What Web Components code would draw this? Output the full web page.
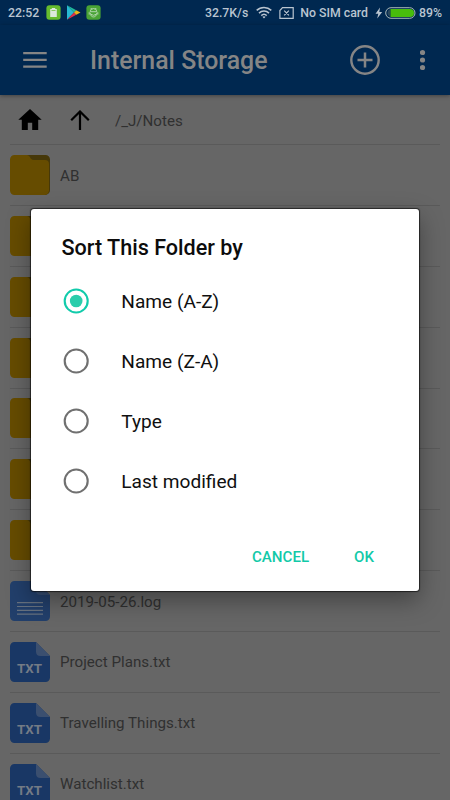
<!DOCTYPE html>
<html lang="en">
<head>
<meta charset="utf-8">
<title>Internal Storage</title>
<style>
html,body{margin:0;height:100%;overflow:hidden;background:#666}
body{font-family:Roboto,"Noto Sans",sans-serif}
</style>
</head>
<body>
<file-app></file-app>
<script>
const define = (name, html) => customElements.define(name, class extends HTMLElement {
  constructor() {
    super();
    const t = document.createElement('template');
    t.innerHTML = html;
    this.attachShadow({mode: 'open'}).appendChild(t.content.cloneNode(true));
  }
});

define('status-bar', `
<style>
:host{display:flex;align-items:center;height:25px;padding:0 8px;box-sizing:border-box;background:#002850;color:#bac5d0;font-size:12.300px;font-weight:500;line-height:24px;white-space:nowrap}
svg{display:block;flex:none}
span{padding-top:1px}
.time{width:38px}
.app{margin-right:5px}
.speed{margin-left:auto}
.wifi{margin-left:8px}.sim{margin-left:7px}.none{margin-left:6px}.bolt{margin-left:7px}.bat{margin-left:2px}.pct{margin-left:3px}
</style>
<span class="time">22:52</span>
<svg class="app" width="15" height="15" viewBox="0 0 15 15"><rect x=".4" y=".2" width="14.2" height="14.6" rx="3" fill="#66bc2e"/><path d="M4.2 4h1.6V3h3.4v1h1.6v8H4.2z" fill="#dce9dc"/><path d="M5.500 5.500h4" stroke="#66bc2e" stroke-width=".7"/></svg>
<svg class="app" width="15" height="15" viewBox="0 0 15 15"><path d="M1 .2v14.6L8 7.500z" fill="#28b9d3"/><path d="M1 .2 10.300 5.200 8 7.500z" fill="#20bc9c"/><path d="M1 14.800 10.300 9.800 8 7.500z" fill="#dc304c"/><path d="M10.300 5.200 14.500 7.500 10.300 9.800 8 7.500z" fill="#e9b51a"/></svg>
<svg class="app" width="15" height="15" viewBox="0 0 15 15"><rect x=".4" y=".2" width="14.2" height="14.6" rx="3" fill="#49a335"/><g fill="none" stroke="#b9d9b5" stroke-width=".9"><path d="M4.200 6.700a3.300 3.200 0 0 1 6.600 0zM4.200 7.800c0 5.500 6.600 5.500 6.600 0M4.800 3l1.100 1.400M10.200 3 9.100 4.400M3.200 7.200v2.400M11.800 7.200v2.400M5 9.300q2.500 2 5 0"/></g></svg>
<span class="speed">32.7K/s</span>
<svg class="wifi" width="16" height="13" viewBox="0 0 16 13" fill="none" stroke="#bac5d0" stroke-width="1.500"><path d="M.7 4.400a10.600 10.600 0 0 1 14.600 0M3 7.100a7.200 7.200 0 0 1 10 0M5.300 9.600a3.900 3.900 0 0 1 5.400 0"/><path d="M6.400 10.700 8 12.400l1.600-1.700q-1.600-1-3.200 0z" fill="#bac5d0" stroke="none"/></svg>
<svg class="sim" width="15" height="12" viewBox="0 0 15 12" fill="none" stroke="#bac5d0" stroke-width="1.200"><path d="M3.500.7h10.700v10.600H.9V3.500zM5.200 3.700l4.700 4.700M9.900 3.700 5.200 8.400"/></svg>
<span class="none">No SIM card</span>
<svg class="bolt" width="8" height="12" viewBox="0 0 8 12"><path d="M5 .5.5 6.700h2.800L2.200 11.500 7.200 5H4.300z" fill="#bac5d0"/></svg>
<svg class="bat" width="31" height="12" viewBox="0 0 31 12"><rect x=".7" y=".7" width="29.300" height="10.600" rx="5.300" fill="none" stroke="#a9b7b6" stroke-width="1"/><path d="M5.500 2h19.500a4 4 0 0 1 0 8h-19.500z" fill="#48bd0c"/><path d="M5 2.300a4 4 0 0 0 0 7.400z" fill="#29475c"/></svg>
<span class="pct">89%</span>`);

define('app-bar', `
<style>
:host{display:flex;align-items:center;height:70px;padding:0 24px 0 23px;box-sizing:border-box;background:#002850;position:relative;z-index:1;box-shadow:0 1px 4px rgba(0,0,0,.35)}
svg{display:block;flex:none}
h1{flex:1;margin:2px 0 0 43px;font-size:24.900px;font-weight:500;line-height:30px;color:#858585;white-space:nowrap}
.dots{margin-left:40px}
</style>
<svg width="24" height="16" viewBox="0 0 24 16" fill="#858585"><path d="M.2 0h23.500v2.300H.2zM.2 6.700h23.500V9H.2zM.2 13.400h23.500v2.300H.2z"/></svg>
<h1><slot></slot></h1>
<svg width="30" height="30" viewBox="0 0 30 30" fill="none" stroke="#858585" stroke-width="2.400"><circle cx="15" cy="15" r="13.700"/><path d="M7.500 15h15M15 7.500v15" stroke-width="2.500"/></svg>
<svg class="dots" width="6" height="22" viewBox="0 0 6 22" fill="#858585"><circle cx="2.500" cy="3.500" r="2.600"/><circle cx="2.500" cy="11" r="2.600"/><circle cx="2.500" cy="18.500" r="2.600"/></svg>`);

define('path-bar', `
<style>
:host{display:flex;align-items:center;height:49.200px;margin:0 10px;border-bottom:1px solid #5a5a5a;box-sizing:content-box;font-size:15.100px;color:#303030}
svg{display:block}
.home{margin-left:8px}.up{margin-left:28px}
span{margin:2px 0 0 25px}
</style>
<svg class="home" width="24" height="21" viewBox="0 0 24 21"><path d="M12 0 .3 10.700h3.500V21h6v-7.200h4.400V21h6V10.700h3.500z" fill="#000"/></svg>
<svg class="up" width="20" height="20" viewBox="0 0 20 20" fill="none" stroke="#000" stroke-width="2.200"><path d="M10 20V2M1.200 10.300 10 1.500l8.800 8.800"/></svg>
<span><slot></slot></span>`);

define('folder-icon', `
<style>:host{display:block}svg{display:block}</style>
<svg width="40" height="40" viewBox="0 0 40 40"><path d="M15 0h20.500a4.500 4.500 0 0 1 4.500 4.500V35a5 5 0 0 1-5 5h-9z" fill="#463809"/><path d="M4.500 0h12.500q1.500 0 2.500 1.500l1.500 2.200Q22 5 24 5h11q4 0 4 4v26.500a4.500 4.500 0 0 1-4.500 4.500h-30A4.500 4.500 0 0 1 0 35.500V4.500A4.500 4.500 0 0 1 4.500 0z" fill="#664c00"/></svg>`);

define('log-icon', `
<style>:host{display:block}svg{display:block}</style>
<svg width="40" height="40" viewBox="0 0 40 40"><path d="M4.500 0H26l14 14v21.500a4.500 4.500 0 0 1-4.500 4.500h-31A4.500 4.500 0 0 1 0 35.500v-31A4.500 4.500 0 0 1 4.500 0z" fill="#223f6b"/><path d="M26 0l14 14H30.500q-4.500 0-4.500-4.500z" fill="#354c70"/><path d="M7 21.700h26M7 25.500h26M7 29.400h26M7 33.200h26" stroke="#66717f" stroke-width="1.200"/></svg>`);

define('txt-icon', `
<style>:host{display:grid;width:40px;height:40px;color:#747b85;font-size:13.300px;font-weight:700;line-height:16px}svg,span{grid-area:1/1}svg{display:block}span{align-self:end;text-align:center;padding:0 1px 4.500px 0}</style>
<svg width="40" height="40" viewBox="0 0 40 40"><path d="M4.500 0H26l14 14v21.500a4.500 4.500 0 0 1-4.500 4.500h-31A4.500 4.500 0 0 1 0 35.500v-31A4.500 4.500 0 0 1 4.500 0z" fill="#193765"/><path d="M26 0l14 14H30.500q-4.500 0-4.500-4.500z" fill="#3b4f6f"/></svg><span>TXT</span>`);

define('file-row', `
<style>
:host{display:flex;align-items:center;gap:10px;height:60.850px;box-sizing:border-box;margin:0 10px;border-bottom:1px solid #5a5a5a;font-size:15.150px;color:#303030;white-space:nowrap}
span{padding-top:1px}
</style>
<slot name="icon"></slot><span><slot></slot></span>`);

define('radio-row', `
<style>
:host{display:flex;align-items:center;height:60px;padding-left:32px;font-size:19.100px;color:#101010}
svg{display:block;margin-right:32.300px}
.dot{display:none}
:host([checked]) .ring{stroke:#11cbab}
:host([checked]) .dot{display:block}
</style>
<svg width="26" height="26" viewBox="0 0 26 26"><circle class="ring" cx="13.200" cy="13" r="11.500" fill="none" stroke="#707070" stroke-width="2.100"/><circle class="dot" cx="13.200" cy="13" r="6.300" fill="#2acdab"/></svg>
<span><slot></slot></span>`);

define('sort-dialog', `
<style>
:host{position:absolute;left:31px;top:209px;width:388px;height:382px;box-sizing:border-box;background:#fff;border-radius:3px;box-shadow:0 0 1px 1px rgba(0,0,0,.6),0 9px 24px rgba(0,0,0,.36);z-index:2;display:flex;flex-direction:column}
h2{margin:24px 0 8px 30.500px;font-size:21.600px;line-height:30px;font-weight:500;color:#0c0c0c}
footer{display:flex;justify-content:flex-end;gap:45px;margin-top:36px;padding-right:45px;font-size:15.100px;line-height:20px;font-weight:500;color:#12c9a8}
</style>
<h2><slot name="title"></slot></h2>
<slot></slot>
<footer><span>CANCEL</span><span>OK</span></footer>`);

const folders = ['AB', '', '', '', '', '', ''].map(n => `<file-row><folder-icon slot="icon"></folder-icon>${n}</file-row>`).join('');
const texts = ['Project Plans.txt', 'Travelling Things.txt', 'Watchlist.txt'].map(n => `<file-row><txt-icon slot="icon"></txt-icon>${n}</file-row>`).join('');
define('file-app', `
<style>:host{display:block;width:450px;height:800px;overflow:hidden;position:relative;background:#666}</style>
<status-bar></status-bar>
<app-bar>Internal Storage</app-bar>
<path-bar>/_J/Notes</path-bar>
${folders}
<file-row><log-icon slot="icon"></log-icon>2019-05-26.log</file-row>
${texts}
<sort-dialog>
<span slot="title">Sort This Folder by</span>
<radio-row checked>Name (A-Z)</radio-row>
<radio-row>Name (Z-A)</radio-row>
<radio-row>Type</radio-row>
<radio-row>Last modified</radio-row>
</sort-dialog>`);
</script>
</body>
</html>
